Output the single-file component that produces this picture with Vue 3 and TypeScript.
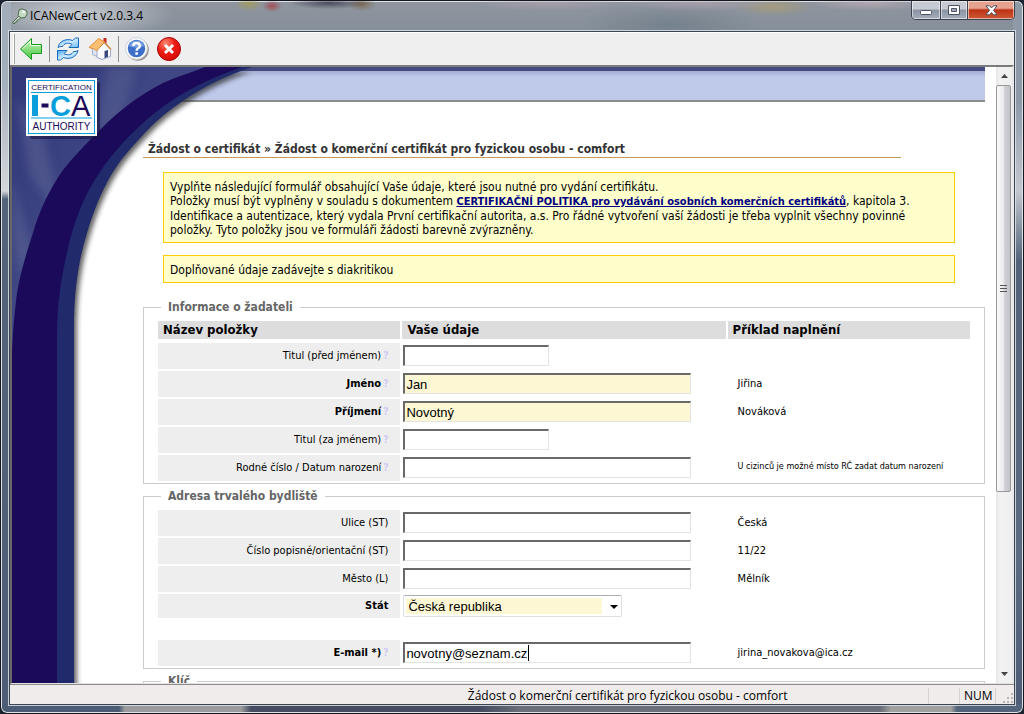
<script setup lang="ts">
import { ref } from 'vue'

interface Field {
  id: string
  label: string
  value?: string
  example?: string
  note?: boolean
  required?: boolean
  help?: boolean
  short?: boolean
}

const applicant = ref<Field[]>([
  { id: 'title-before', label: 'Titul (před jménem)', help: true, short: true },
  { id: 'first-name', label: 'Jméno', value: 'Jan', example: 'Jiřina', required: true, help: true },
  { id: 'last-name', label: 'Příjmení', value: 'Novotný', example: 'Nováková', required: true, help: true },
  { id: 'title-after', label: 'Titul (za jménem)', help: true, short: true },
  {
    id: 'birth',
    label: 'Rodné číslo / Datum narození',
    example: 'U cizinců je možné místo RČ zadat datum narození',
    note: true,
    help: true,
  },
])

const address = ref<Field[]>([
  { id: 'street', label: 'Ulice (ST)', example: 'Česká' },
  { id: 'number', label: 'Číslo popisné/orientační (ST)', example: '11/22' },
  { id: 'city', label: 'Město (L)', example: 'Mělník' },
])

const country = ref('Česká republika')
const email = ref('novotny@seznam.cz')
</script>

<template>
  <div class="window">
    <header class="titlebar">
      <svg class="app-icon" width="16" height="16" viewBox="0 0 16 16" aria-hidden="true">
        <path d="M7 8 L1 14 L1 15.500 L3 15.500 L3 14 L5 14 L5 12 L6.500 12 L9 9.500" fill="#cfe0cc" stroke="#4f6b52" stroke-width="1" />
        <path d="M7 2 L10 .8 L14.500 2.500 L15.300 6 L13 9.500 L9 10 L6 7.500 Z" fill="#c2dac0" stroke="#4f6b52" stroke-width="1" />
        <path d="M10.500 3.500 L13 4.500" stroke="#fff" stroke-width="2" />
      </svg>
      <span class="app-title">ICANewCert v2.0.3.4</span>
      <div class="window-buttons">
        <button type="button" class="wb wb-min" aria-label="Minimalizovat">
          <svg width="13" height="7" viewBox="0 0 13 7"><rect x=".5" y="1.500" width="11" height="4" rx="1" fill="#fff" stroke="#4c5262" /></svg>
        </button>
        <button type="button" class="wb wb-max" aria-label="Maximalizovat">
          <svg width="12" height="11" viewBox="0 0 12 11">
            <path d="M.5 .5H11.500V9.500H.5Z" fill="#fff" stroke="#4c5262" />
            <path d="M3.500 3.500H8.500V6.500H3.500Z" fill="#a4abb8" stroke="#4c5262" />
          </svg>
        </button>
        <button type="button" class="wb wb-close" aria-label="Zavřít">
          <svg width="13" height="11" viewBox="0 0 13 11">
            <path d="M1 .8H4.500L6.500 3L8.500 .8H12L8.500 5.300L12 9.800H8.500L6.500 7.600L4.500 9.800H1L4.500 5.300Z" fill="#fff" stroke="#4c5262" />
          </svg>
        </button>
      </div>
    </header>

    <div class="client">
      <nav class="toolbar">
        <span class="grip"></span>
        <button type="button" class="tool" aria-label="Zpět">
          <svg width="24" height="24" viewBox="0 0 24 24">
            <defs>
              <linearGradient id="g-arrow" x1="0" y1="0" x2="0" y2="1">
                <stop offset="0" stop-color="#d3f7c4" /><stop offset="1" stop-color="#3fc43a" />
              </linearGradient>
            </defs>
            <path d="M1.500 12 L12.500 1.500 V7.500 H22.500 V16.500 H12.500 V22.500 Z" fill="url(#g-arrow)" stroke="#159a1b" stroke-linejoin="round" />
            <path d="M3.300 12 L11.500 4 V8.500 H21.500" fill="none" stroke="#effce8" />
          </svg>
        </button>
        <span class="sep"></span>
        <button type="button" class="tool" aria-label="Obnovit">
          <svg width="24" height="24" viewBox="0 0 24 24">
            <defs>
              <linearGradient id="g-ref" x1="0" y1="0" x2="1" y2="1">
                <stop offset="0" stop-color="#4ba3ea" /><stop offset=".5" stop-color="#d0edff" /><stop offset="1" stop-color="#63b8f5" />
              </linearGradient>
            </defs>
            <path d="M2 10.500 C3 4.500 10 .8 16.500 3.500 L19.500 1 H22.500 V10.500 H13 L16 7.300 C11.500 5 8 6.500 6.500 9.500 Q4 9 2 10.500 Z" fill="url(#g-ref)" stroke="#1769bd" stroke-linejoin="round" />
            <path d="M22 13.500 C21 19.500 14 23.200 7.500 20.500 L4.500 23 H1.500 V13.500 H11 L8 16.700 C12.500 19 16 17.500 17.500 14.500 Q20 15 22 13.500 Z" fill="url(#g-ref)" stroke="#1769bd" stroke-linejoin="round" />
          </svg>
        </button>
        <button type="button" class="tool" aria-label="Domů">
          <svg width="24" height="24" viewBox="0 0 24 24">
            <path d="M15.500 1 H18.500 V7 L15.500 4Z" fill="#cc2a22" />
            <path d="M4.500 11 L9.500 5 L15 12 V22 L4.500 17.500 Z" fill="#dfe4f3" stroke="#a7b0cd" />
            <path d="M9 13 L16 6 L22.500 12.500 V19.500 L14 22.500 L9 20.500Z" fill="#fafbff" stroke="#9ca7ca" />
            <path d="M1 10.500 L10.500 1.500 L16.500 5 L8.500 14 L6.500 12Z" fill="#fdbf72" stroke="#e38a35" stroke-linejoin="round" />
            <path d="M16 5 L23 12.500" stroke="#d98d4b" stroke-width="1.500" />
            <path d="M16.500 14 L20 13 V19.800 L16.500 21.300Z" fill="#3a4a7c" />
          </svg>
        </button>
        <span class="sep"></span>
        <button type="button" class="tool" aria-label="Nápověda">
          <svg width="24" height="24" viewBox="0 0 24 24">
            <circle cx="12.800" cy="12.800" r="11" fill="#8e8e8e" />
            <circle cx="11.500" cy="11.500" r="11" fill="#f8f9fc" stroke="#c3c8d4" stroke-width=".8" />
            <circle cx="11.500" cy="11.500" r="8.700" fill="#3c6fc9" />
            <path d="M4 9 A8 8 0 0 1 19 9 Q12 12 4 9Z" fill="#7ba3e4" />
            <path d="M8.300 9 Q8.300 6 11.500 6 Q14.800 6 14.800 8.800 Q14.800 10.500 12.800 11.500 Q11.600 12.200 11.600 13.800" fill="none" stroke="#fff" stroke-width="2.400" />
            <rect x="10.300" y="15.300" width="2.600" height="2.500" fill="#fff" />
          </svg>
        </button>
        <button type="button" class="tool" aria-label="Ukončit">
          <svg width="24" height="24" viewBox="0 0 24 24">
            <defs>
              <radialGradient id="g-stop" cx=".35" cy=".25" r=".8">
                <stop offset="0" stop-color="#ff8a72" /><stop offset=".5" stop-color="#ec1c14" /><stop offset="1" stop-color="#d80a08" />
              </radialGradient>
            </defs>
            <circle cx="12" cy="12" r="11.500" fill="url(#g-stop)" stroke="#a80705" />
            <path d="M8 8 L16 16 M16 8 L8 16" stroke="#fff" stroke-width="3" />
          </svg>
        </button>
      </nav>

      <div class="viewport">
        <main class="page">
          <div class="banner"></div>
          <div class="art" aria-hidden="true">
            <svg width="260" height="1600" viewBox="0 0 260 1600">
              <defs>
                <linearGradient id="g-sky" x1="0" y1="0" x2="1" y2="1">
                  <stop offset="0" stop-color="#303678" /><stop offset=".4" stop-color="#3f4784" /><stop offset="1" stop-color="#3c437f" />
                </linearGradient>
                <filter id="soft" x="-20%" y="-5%" width="150%" height="110%"><feGaussianBlur stdDeviation="2.500" /></filter>
                <filter id="beam" x="-30%" y="-30%" width="160%" height="160%"><feGaussianBlur stdDeviation="5" /></filter>
                <clipPath id="c-sky"><path d="M193 0 C178 6 164 10 151 16 C127 28 105 45 88 63 C73 78 62 89 51 103 C37 123 27 144 21 166 C13 190 8 208 5 226 C2 250 0 275 0 293 V0Z" /></clipPath>
              </defs>
              <path d="M0 2 H236 C205 12 185 24 168 36 C152 47 142 56 131 68 C118 82 107 94 98 110 C88 128 81 146 75 166 C66 195 62 226 62 260 V1600 H0Z" fill="#222" opacity=".7" filter="url(#soft)" transform="translate(3 3)" />
              <path d="M0 0 H240 C205 12 185 24 168 36 C152 47 142 56 131 68 C118 82 107 94 98 110 C88 128 81 146 75 166 C66 195 62 226 62 260 V1600 H0Z" fill="#212a6b" />
              <path d="M0 0 H230 C190 14 160 30 131 56 C110 75 94 94 81 116 C68 138 60 162 55 186 C49 212 45 236 45 270 V1600 H0Z" fill="#1b0a59" />
              <g clip-path="url(#c-sky)">
                <rect width="200" height="300" fill="url(#g-sky)" />
                <path d="M95 0 L125 0 L108 60 L84 64Z" fill="#6a729f" opacity=".35" filter="url(#beam)" />
                <path d="M4 30 L18 110 L50 150 L30 60Z" fill="#6a729f" opacity=".4" filter="url(#beam)" />
                <path d="M0 110 L22 190 L8 210 L0 170Z" fill="#6a729f" opacity=".4" filter="url(#beam)" />
              </g>
            </svg>
          </div>
          <svg class="logo" width="76" height="63" viewBox="0 0 76 63" role="img" aria-label="I.CA Certification Authority">
            <rect x="4" y="4" width="70" height="57" rx="2" fill="#15103f" opacity=".6" />
            <rect width="71" height="58" fill="#fff" />
            <rect x="2.500" y="2.500" width="66" height="53" fill="#fff" stroke="#0a9fdc" />
            <path d="M5 14.500H66 M5 40H66" stroke="#0a9fdc" stroke-width="1.200" />
            <text x="35.500" y="12" text-anchor="middle" class="logo-small">CERTIFICATION</text>
            <text x="35.500" y="51.500" text-anchor="middle" class="logo-mid">AUTHORITY</text>
            <rect x="6" y="17" width="6" height="21" fill="#0a9fdc" />
            <rect x="15.500" y="25.500" width="7" height="4" fill="#1b0a59" />
            <text x="24" y="37.500" class="logo-big"><tspan class="cyan">C</tspan>A</text>
          </svg>

          <div class="content">
            <h1>Žádost o certifikát » Žádost o komerční certifikát pro fyzickou osobu - comfort</h1>

            <p class="notice">
              Vyplňte následující formulář obsahující Vaše údaje, které jsou nutné pro vydání certifikátu.<br />
              Položky musí být vyplněny v souladu s dokumentem
              <a href="#politika">CERTIFIKAČNÍ POLITIKA pro vydávání osobních komerčních certifikátů</a>, kapitola 3.<br />
              Identifikace a autentizace, který vydala První certifikační autorita, a.s. Pro řádné vytvoření vaší žádosti je třeba vyplnit všechny povinné<br />
              položky. Tyto položky jsou ve formuláři žádosti barevně zvýrazněny.
            </p>
            <p class="notice">Doplňované údaje zadávejte s diakritikou</p>

            <fieldset>
              <legend>Informace o žadateli</legend>
              <table>
                <thead>
                  <tr><th class="c-label">Název položky</th><th class="c-value">Vaše údaje</th><th class="c-example">Příklad naplnění</th></tr>
                </thead>
                <tbody>
                  <tr v-for="f in applicant" :key="f.id">
                    <td class="label" :class="{ required: f.required }">
                      <label :for="f.id">{{ f.label }}</label><span v-if="f.help" class="help">?</span>
                    </td>
                    <td class="value">
                      <input :id="f.id" v-model="f.value" type="text" :class="{ short: f.short, filled: f.required }" />
                    </td>
                    <td class="example" :class="{ note: f.note }">{{ f.example }}</td>
                  </tr>
                </tbody>
              </table>
            </fieldset>

            <fieldset>
              <legend>Adresa trvalého bydliště</legend>
              <table>
                <tbody>
                  <tr v-for="f in address" :key="f.id">
                    <td class="label c-label"><label :for="f.id">{{ f.label }}</label></td>
                    <td class="value c-value"><input :id="f.id" v-model="f.value" type="text" /></td>
                    <td class="example c-example">{{ f.example }}</td>
                  </tr>
                  <tr class="compact">
                    <td class="label required"><label for="country">Stát</label></td>
                    <td class="value">
                      <div class="select">
                        <select id="country" v-model="country">
                          <option>Česká republika</option>
                        </select>
                        <svg width="8" height="4" viewBox="0 0 8 4" aria-hidden="true"><path d="M0 0H8L4 4Z" /></svg>
                      </div>
                    </td>
                    <td></td>
                  </tr>
                  <tr class="spacer"><td colspan="3"></td></tr>
                  <tr>
                    <td class="label required"><label for="email">E-mail *)</label><span class="help">?</span></td>
                    <td class="value">
                      <div class="active-field">
                        <input id="email" v-model="email" type="text" />
                        <span class="caret"></span>
                      </div>
                    </td>
                    <td class="example">jirina_novakova@ica.cz</td>
                  </tr>
                </tbody>
              </table>
            </fieldset>

            <fieldset class="key">
              <legend>Klíč</legend>
            </fieldset>
          </div>
        </main>

        <div class="scrollbar">
          <button type="button" class="sb-arrow" aria-label="Nahoru">
            <svg width="7" height="4" viewBox="0 0 7 4"><path d="M3.500 0L7 4H0Z" fill="#444" /></svg>
          </button>
          <div class="thumb"><span></span><span></span><span></span></div>
          <div class="track"></div>
          <button type="button" class="sb-arrow" aria-label="Dolů">
            <svg width="7" height="4" viewBox="0 0 7 4"><path d="M0 0H7L3.500 4Z" fill="#444" /></svg>
          </button>
        </div>
      </div>

      <footer class="statusbar">
        <span class="pane-empty"></span>
        <span class="pane-text">Žádost o komerční certifikát pro fyzickou osobu - comfort</span>
        <span class="pane-gap"></span>
        <span class="pane-num">NUM</span>
        <span class="pane-size">
          <svg width="11" height="11" viewBox="0 0 11 11" fill="#b9b5b5" aria-hidden="true">
            <path d="M8 0h2v2h-2z M4 4h2v2h-2z M8 4h2v2h-2z M0 8h2v2h-2z M4 8h2v2h-2z M8 8h2v2h-2z" />
          </svg>
        </span>
      </footer>
    </div>
  </div>
</template>

<style>
body {
  background: #1c2430;
}
</style>

<style scoped>
* {
  box-sizing: border-box;
}

.window {
  --ui: 'DejaVu Sans Condensed', 'DejaVu Sans', sans-serif;
  display: flex;
  flex-direction: column;
  height: 100vh;
  padding: 0 8px 8px;
  overflow: hidden;
  border: 1px solid #14161c;
  border-radius: 7px;
  box-shadow: inset 0 0 0 1px #dde4ec;
  font-family: var(--ui);
  font-size: 12px;
  color: #000;
  background:
    linear-gradient(90deg, #4b5c74 0 118px, #9c9c9e 124px 240px, #474c62 250px 480px, #6b7079 520px 880px, #a1a1a1 890px 950px, #53647b 956px) bottom / 100% 9px no-repeat,
    linear-gradient(#a3adb9 0, #a5afbc 80px, #d3d6da 190px, #53647a 198px, #4d5d75 100%) left / 10px 100% no-repeat,
    linear-gradient(#8f9aa7 0, #8e9aa9 100px, #c3c8cf 190px, #53647a 260px, #5a6b82 560px, #4c5c74 100%) right / 10px 100% no-repeat,
    radial-gradient(ellipse 100px 26px at 75px 14px, rgba(214, 218, 222, 0.8), transparent),
    linear-gradient(#8f959e, #858f9a 30px) top / 100% 32px no-repeat,
    #53647a;
}

.titlebar {
  display: flex;
  align-items: flex-start;
  flex: none;
  height: 30px;
  padding-left: 3px;
  background:
    radial-gradient(ellipse 14px 7px at 240px 3px, rgba(170, 160, 60, 0.6), transparent),
    radial-gradient(ellipse 10px 6px at 263px 5px, rgba(170, 50, 60, 0.7), transparent),
    radial-gradient(ellipse 40px 6px at 320px 2px, rgba(50, 45, 65, 0.7), transparent),
    radial-gradient(ellipse 14px 7px at 353px 3px, rgba(120, 85, 40, 0.6), transparent),
    radial-gradient(ellipse 80px 8px at 540px 2px, rgba(180, 165, 180, 0.6), transparent),
    radial-gradient(ellipse 80px 8px at 690px 2px, rgba(180, 165, 180, 0.6), transparent),
    radial-gradient(ellipse 40px 9px at 765px 6px, rgba(180, 160, 105, 0.6), transparent),
    radial-gradient(ellipse 60px 8px at 860px 2px, rgba(190, 175, 185, 0.7), transparent),
    radial-gradient(ellipse 90px 22px at 660px 24px, rgba(100, 115, 128, 0.5), transparent);
}

.app-icon {
  margin: 7px 2px 0 0;
}

.app-title {
  margin-top: 6px;
  font-family: 'Open Sans', 'Noto Sans', sans-serif;
  font-size: 12px;
  line-height: 17px;
}

.window-buttons {
  display: flex;
  margin-left: auto;
  overflow: hidden;
  border: 1px solid #3c4250;
  border-top: 0;
  border-radius: 0 0 5px 5px;
}

button {
  padding: 0;
  font: inherit;
  cursor: pointer;
}

.wb {
  display: flex;
  align-items: center;
  justify-content: center;
  height: 18px;
  border: 0;
  box-shadow: inset 0 0 0 1px rgba(255, 255, 255, 0.55);
  background: linear-gradient(#c6cad2 0 45%, #8a93a1 50%, #a5aebb);
}

.wb-min {
  width: 28px;
  padding-top: 4px;
}

.wb-max {
  width: 27px;
  border-left: 1px solid #3c4250;
}

.wb-close {
  width: 47px;
  border-left: 1px solid #3c4250;
  background: linear-gradient(#e5a28f 0 40%, #bd3215 50%, #cf5a36);
}

.client {
  display: flex;
  flex: 1;
  flex-direction: column;
  min-height: 0;
  border: 1px solid #3c4450;
  outline: 1px solid rgba(225, 232, 240, 0.8);
  background: #f0f0f0;
}

.toolbar {
  display: flex;
  align-items: center;
  flex: none;
  height: 33px;
  padding-left: 3px;
  border-top: 1px solid #fff;
  background: #efefef;
}

.grip {
  width: 2px;
  height: 30px;
  border-right: 1px solid #a5a5a5;
  background: #fff;
}

.tool {
  display: flex;
  align-items: center;
  justify-content: center;
  width: 32px;
  height: 28px;
  border: 0;
  background: none;
}

.sep {
  width: 1px;
  height: 26px;
  margin: 0 2px;
  background: #8d8d8d;
}

.viewport {
  display: flex;
  flex: 1;
  min-height: 0;
  border: 2px solid #696969;
  border-top-color: #7b7b7b;
  border-right-color: #e8e8e8;
  border-bottom: 1px solid #e3e3e3;
  background: #fff;
}

.page {
  position: relative;
  flex: 1;
  min-width: 0;
  overflow: hidden;
}

.banner {
  height: 35px;
  margin-right: 11px;
  border-top: 4px solid #434a80;
  border-bottom: 2px solid #8b8b8b;
  background: linear-gradient(#a5acd2, #bfcaeb 6px);
}

.art {
  position: absolute;
  inset: 0 auto 0 0;
  overflow: hidden;
}

.logo {
  position: absolute;
  top: 11px;
  left: 14px;
}

.logo text {
  font-family: 'Liberation Sans', Arial, sans-serif;
  fill: #1b0a59;
}

.logo .logo-small {
  font-size: 8px;
}

.logo .logo-mid {
  font-size: 10px;
}

.logo .logo-big {
  font-size: 29px;
}

.logo .cyan {
  font-weight: 700;
  fill: #0a9fdc;
}

.content {
  position: relative;
  padding: 40px 11px 0 131px;
}

h1 {
  margin: 0 84px 14px 0;
  padding-left: 5px;
  border-bottom: 1px solid #c49a56;
  font-size: 12px;
  line-height: 15px;
  color: #333;
}

.notice {
  margin: 0 30px 12px 20px;
  padding: 7px 6px 5px;
  border: 1px solid #fc0;
  font-size: 12px;
  line-height: 14px;
  white-space: nowrap;
  background: #ffc;
}

.notice a {
  font-size: 11px;
  font-weight: 700;
  color: #000080;
}

fieldset {
  min-width: 0;
  margin: 0 0 4px;
  padding: 4px 14px 0;
  border: 1px solid #ccc;
}

.notice + fieldset {
  margin-top: 16px;
}

legend {
  margin-left: 3px;
  padding: 0 7px;
  font-size: 12px;
  font-weight: 700;
  line-height: 16px;
  color: #666;
}

.key {
  height: 60px;
}

table {
  width: calc(100% + 4px);
  margin: 0 -2px;
  border-spacing: 2px;
  table-layout: fixed;
}

.c-label,
.c-example {
  width: 30%;
}

th {
  height: 20px;
  padding: 0 5px;
  border-bottom: 2px solid #fff;
  font-size: 13px;
  line-height: 18px;
  text-align: left;
  background: #ddd;
}

td {
  height: 26px;
  padding: 0;
  font-size: 11px;
  line-height: 14px;
}

.label {
  padding-right: 12px;
  text-align: right;
  background: #eee;
}

.required {
  font-weight: 700;
}

.help {
  margin-left: 2px;
  font-size: 10px;
  font-weight: 700;
  color: #d0caf5;
}

.value {
  padding: 2px 1px 3px;
  vertical-align: top;
}

.value input {
  display: block;
  width: 288px;
  max-width: 100%;
  height: 21px;
  padding: 0 1px;
  border: 2px solid;
  border-color: #696969 #e3e3e3 #e3e3e3 #696969;
  border-right-width: 1px;
  border-bottom-width: 1px;
  outline: 0;
  font-family: 'Liberation Sans', Arial, sans-serif;
  font-size: 13px;
  background: #fff;
}

.value input.short {
  width: 146px;
}

.value input.filled {
  background: #fdf8d3;
}

.example {
  padding-left: 10px;
}

.note {
  padding-bottom: 4px;
  font-size: 9px;
}

.compact td {
  height: 24px;
}

.compact .value {
  padding: 1px;
}

.spacer td {
  height: 18px;
}

.select {
  position: relative;
  width: 219px;
}

.select select {
  display: block;
  width: 100%;
  height: 22px;
  padding: 0 20px 0 4px;
  border: 1px solid #dcdfe4;
  border-top-color: #abadb3;
  border-radius: 2px;
  appearance: none;
  font-family: 'Liberation Sans', Arial, sans-serif;
  font-size: 13px;
  color: #000;
  background: linear-gradient(#fdf8d3, #fdf8d3) 2px 2px / calc(100% - 21px) 16px no-repeat #fff;
}

.select svg {
  position: absolute;
  top: 10px;
  right: 4px;
}

.active-field {
  position: relative;
}

.caret {
  position: absolute;
  top: 3px;
  left: 125px;
  width: 1px;
  height: 16px;
  background: #000;
}

.scrollbar {
  display: flex;
  flex: none;
  flex-direction: column;
  width: 16px;
  background: linear-gradient(90deg, #e6e6e6, #f2f2f2 4px, #efefef);
}

.sb-arrow {
  display: flex;
  align-items: center;
  justify-content: center;
  flex: none;
  height: 18px;
  border: 0;
  background: none;
}

.thumb {
  display: flex;
  flex: 407;
  flex-direction: column;
  align-items: center;
  justify-content: center;
  gap: 2px;
  margin-right: 1px;
  border: 1px solid #979797;
  border-radius: 2px;
  background: linear-gradient(90deg, #fafafa, #eaeaec 50%, #cfd0d5 60%, #c4c5ca);
}

.thumb span {
  width: 7px;
  height: 1px;
  background: #555;
}

.track {
  flex: 174;
}

.statusbar {
  display: flex;
  align-items: center;
  flex: none;
  height: 20px;
  padding-top: 2px;
  border-top: 1px solid #8c8c8c;
  font-family: 'Open Sans', 'Noto Sans', sans-serif;
  font-size: 12px;
  line-height: 16px;
  background: #f0ecec;
}

.pane-empty {
  flex: 317;
}

.pane-text {
  flex: 600;
  text-align: center;
  white-space: nowrap;
}

.pane-gap,
.pane-num,
.pane-size {
  flex: none;
  height: 16px;
  border-left: 1px solid #d5d1d1;
}

.pane-gap {
  width: 31px;
}

.pane-num {
  width: 36px;
  padding-left: 4px;
}

.pane-size {
  display: flex;
  align-items: flex-end;
  justify-content: flex-end;
  width: 19px;
}
</style>
